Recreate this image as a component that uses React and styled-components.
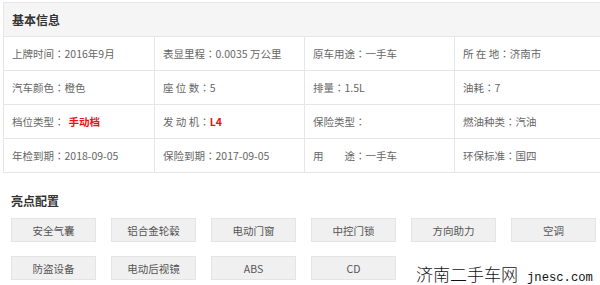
import React from "react";
import styled, { createGlobalStyle } from "styled-components";

const Global = createGlobalStyle`
  html, body { margin: 0; padding: 0; background: #fff; }
  body { font-family: "Microsoft YaHei", "Noto Sans CJK SC", sans-serif; overflow: hidden; }
`;

const Page = styled.div`
  position: relative;
  width: 600px;
  height: 285px;
  padding: 2px 0 0 3px;
  box-sizing: border-box;
  overflow: hidden;
`;

const Table = styled.div`
  width: 600px;
  border: 1px solid #e6e6e6;
  border-right: none;
`;

const Header = styled.div`
  height: 33px;
  background: #f5f5f5;
  border-bottom: 1px solid #e6e6e6;
  display: flex;
  align-items: center;
  padding-left: 8px;
  font-size: 12px;
  font-weight: bold;
  color: #333;
`;

const Grid = styled.div`
  display: grid;
  grid-template-columns: repeat(4, 150px);
`;

const Cell = styled.div`
  box-sizing: border-box;
  display: flex;
  align-items: center;
  padding-left: 8px;
  font-size: 10.5px;
  color: #666;
  white-space: pre;
  border-bottom: ${(p) => (p.$last ? "none" : "1px solid #e6e6e6")};
  border-left: ${(p) => (p.$first ? "none" : "1px solid #e6e6e6")};
  height: ${(p) => (p.$last ? "33px" : "34px")};
`;

const Colon = styled.span`
  font-family: "Noto Sans CJK TC", sans-serif;
`;

const Red = styled.span`
  color: #e3141b;
  font-weight: bold;
  margin-left: ${(p) => (p.$gap ? "4px" : "0")};
`;

const SectionTitle = styled.div`
  margin: 18px 0 0 8px;
  font-size: 12px;
  font-weight: bold;
  color: #333;
  line-height: 20px;
`;

const Tags = styled.div`
  display: grid;
  grid-template-columns: repeat(6, 85px);
  column-gap: 15px;
  row-gap: 14px;
  margin: 7px 0 0 8px;
`;

const Tag = styled.div`
  height: 24px;
  box-sizing: border-box;
  background: #f0f0f0;
  border: 1px solid #e4e4e4;
  display: flex;
  align-items: center;
  justify-content: center;
  font-size: 10.5px;
  color: #555;
`;

const Watermark = styled.div`
  position: absolute;
  left: 416px;
  top: 261px;
  display: flex;
  align-items: baseline;
  color: #111;
  white-space: nowrap;
`;

const WmCn = styled.span`
  font-family: "Noto Sans CJK SC", sans-serif;
  font-weight: 300;
  font-size: 17px;
`;

const WmEn = styled.span`
  font-family: "Liberation Mono", monospace;
  font-size: 12.2px;
  margin-left: 9px;
`;

const rows = [
  [["上牌时间", "2016年9月"], ["表显里程", "0.0035 万公里"], ["原车用途", "一手车"], ["所 在 地", "济南市"]],
  [["汽车颜色", "橙色"], ["座 位 数", "5"], ["排量", "1.5L"], ["油耗", "7"]],
  [["档位类型", "手动档", "gap"], ["发 动 机", "L4", "tight"], ["保险类型", ""], ["燃油种类", "汽油"]],
  [["年检到期", "2018-09-05"], ["保险到期", "2017-09-05"], ["用　　途", "一手车"], ["环保标准", "国四"]],
];

const tags = ["安全气囊", "铝合金轮毂", "电动门窗", "中控门锁", "方向助力", "空调", "防盗设备", "电动后视镜", "ABS", "CD"];

export default function App() {
  return (
    <Page lang="zh-CN">
      <Global />
      <Table>
        <Header>基本信息</Header>
        <Grid>
          {rows.map((r, ri) =>
            r.map(([label, value, red], ci) => (
              <Cell key={`${ri}-${ci}`} $first={ci === 0} $last={ri === rows.length - 1}>
                {label}
                <Colon>：</Colon>
                {red ? <Red $gap={red === "gap"}>{value}</Red> : value}
              </Cell>
            ))
          )}
        </Grid>
      </Table>
      <SectionTitle>亮点配置</SectionTitle>
      <Tags>
        {tags.map((t) => (
          <Tag key={t}>{t}</Tag>
        ))}
      </Tags>
      <Watermark>
        <WmCn>济南二手车网</WmCn>
        <WmEn>jnesc.com</WmEn>
      </Watermark>
    </Page>
  );
}
